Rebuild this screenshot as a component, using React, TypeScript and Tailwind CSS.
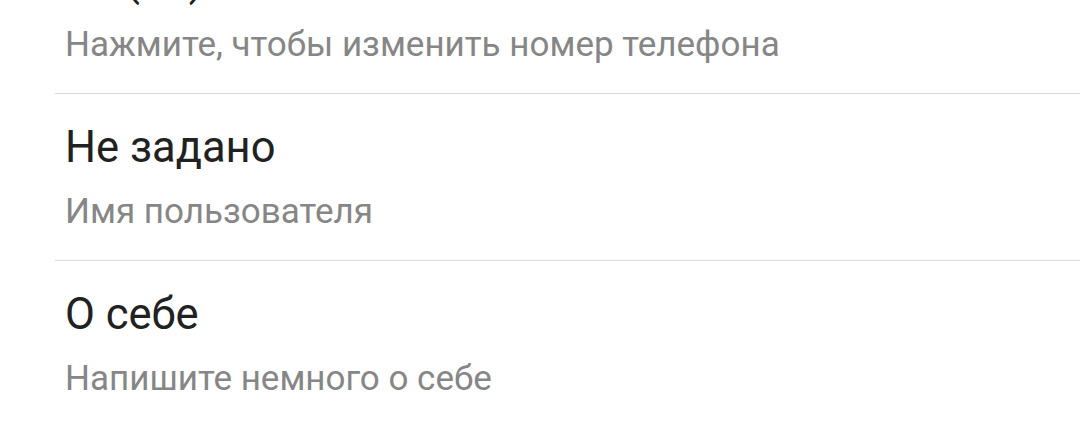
const rows = [
  { title: "+7 (91) 234-56-78", subtitle: "Нажмите, чтобы изменить номер телефона" },
  { title: "Не задано", subtitle: "Имя пользователя" },
  { title: "О себе", subtitle: "Напишите немного о себе" },
]

const App = () => {
  return (
    <div className="h-[421px] w-[1080px] overflow-hidden bg-white font-['Roboto',sans-serif]">
      <div className="mt-[-73px] flex flex-col">
        {rows.map((row, i) => (
          <div
            key={row.subtitle}
            className={`ml-[55px] flex flex-col pl-[10px] pt-[28px] pb-[28px] ${i < rows.length - 1 ? "border-b border-[#dcdcdc]" : ""}`}
          >
            <div className="text-[43.5px] leading-[52px] text-[#212121]">{row.title}</div>
            <div className="mt-[17px] text-[35px] leading-[41px] text-[#868686]">{row.subtitle}</div>
          </div>
        ))}
      </div>
    </div>
  )
}

export default App
